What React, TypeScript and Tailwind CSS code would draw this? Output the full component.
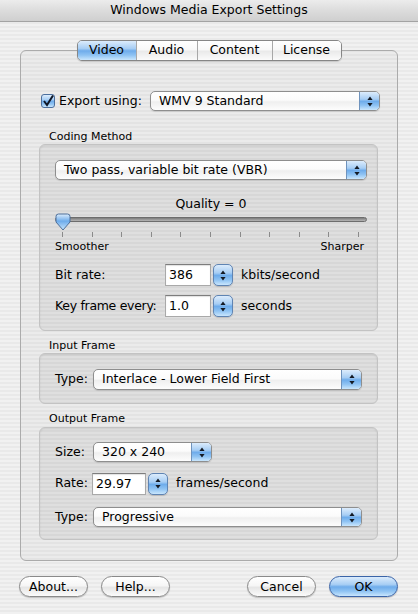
import React from 'react';

const aquaBlue =
  'bg-[linear-gradient(180deg,#dcecfc_0%,#a6cdf4_40%,#6eaceb_52%,#8fc3f3_75%,#c9e6fd_100%)]';

const Arrows: React.FC = () => (
  <svg width="6" height="11" viewBox="0 0 6 11">
    <path d="M3 0.5 L5.6 4 H0.4 Z M3 10.5 L5.6 7 H0.4 Z" fill="#141a24" />
  </svg>
);

const PopUp: React.FC<{ value: string; className: string }> = ({ value, className }) => (
  <div
    className={`flex h-[20px] shrink-0 items-stretch rounded-[5px] border border-[#8e8e8e] bg-[linear-gradient(180deg,#ffffff_0%,#fbfbfb_45%,#efefef_55%,#fdfdfd_100%)] shadow-[0_1px_1px_rgba(0,0,0,0.12)] ${className}`}
  >
    <span className="flex-1 truncate pl-[8px] text-[12.5px] leading-[18px]">{value}</span>
    <span
      className={`flex w-[20px] items-center justify-center rounded-r-[4px] border-l border-[#6f93bd] ${aquaBlue}`}
    >
      <Arrows />
    </span>
  </div>
);

const Stepper: React.FC = () => (
  <div
    className={`flex h-[22px] w-[20px] items-center justify-center rounded-[5px] border border-[#5f84b3] shadow-[0_1px_1px_rgba(0,0,0,0.15)] ${aquaBlue}`}
  >
    <Arrows />
  </div>
);

const Field: React.FC<{ value: string; className: string }> = ({ value, className }) => (
  <div
    className={`h-[22px] shrink-0 border border-[#a9a9a9] border-t-[#7d7d7d] bg-white pl-[3px] text-[12.5px] leading-[20px] shadow-[inset_0_1px_1px_rgba(0,0,0,0.12)] ${className}`}
  >
    {value}
  </div>
);

const Button: React.FC<{ label: string; primary?: boolean }> = ({ label, primary }) => (
  <button
    className={`h-[21px] w-[69px] rounded-full border text-[12.5px] leading-[19px] shadow-[0_1px_1px_rgba(0,0,0,0.2)] ${
      primary
        ? `border-[#3a64a8] ${aquaBlue}`
        : 'border-[#8a8a8a] bg-[linear-gradient(180deg,#ffffff_0%,#f6f6f6_45%,#e6e6e6_55%,#fbfbfb_100%)]'
    }`}
  >
    {label}
  </button>
);

const GroupLabel: React.FC<{ text: string }> = ({ text }) => (
  <div className="h-[14px] pl-[10px] text-[11px] leading-[14px]">{text}</div>
);

const groupBox =
  'w-[339px] rounded-[6px] border border-[#c3c3c3] bg-black/[0.05] shadow-[inset_0_1px_2px_rgba(0,0,0,0.08)]';

const ticks = Array.from({ length: 11 }, (_, i) => i);

export default function App() {
  return (
    <div className="flex h-[614px] w-[418px] flex-col whitespace-nowrap bg-[repeating-linear-gradient(180deg,#f1f1f1_0px,#f1f1f1_2px,#e9e9e9_2px,#e9e9e9_4px)] font-['DejaVu_Sans',sans-serif] text-black">
      {/* title bar */}
      <div className="flex h-[22px] items-center justify-center border-b border-[#a3a3a3] bg-[linear-gradient(180deg,#ececec_0%,#dcdcdc_50%,#cfcfcf_100%)] text-[12.5px]">
        Windows Media Export Settings
      </div>

      {/* tab panel */}
      <div className="ml-[20px] mt-[28px] flex h-[511px] w-[378px] flex-col rounded-[6px] border border-[#ababab] bg-black/[0.025] px-[18px]">
        <div className="-mt-[11px] flex h-[21px] self-center overflow-hidden rounded-[5px] border border-[#868686] text-[12.5px] shadow-[0_1px_1px_rgba(0,0,0,0.15)]">
          <div className={`flex w-[58px] items-center justify-center ${aquaBlue}`}>Video</div>
          {[
            ['Audio', 'w-[61px]'],
            ['Content', 'w-[75px]'],
            ['License', 'w-[69px]'],
          ].map(([t, w]) => (
            <div
              key={t}
              className={`flex ${w} items-center justify-center border-l border-[#a8a8a8] bg-[linear-gradient(180deg,#ffffff_0%,#f8f8f8_45%,#eaeaea_55%,#fbfbfb_100%)]`}
            >
              {t}
            </div>
          ))}
        </div>

        {/* export using */}
        <div className="ml-[2px] mt-[30px] flex h-[20px] items-center">
          <div
            className={`flex h-[14px] w-[14px] shrink-0 items-center justify-center rounded-[3px] border border-[#4b6f9e] ${aquaBlue}`}
          >
            <svg width="12" height="12" viewBox="0 0 12 12">
              <path d="M2 6 L5 10 L11 0.5" stroke="#101828" strokeWidth="2" fill="none" />
            </svg>
          </div>
          <span className="ml-[4px] w-[91px] shrink-0 text-[12.5px]">Export using:</span>
          <PopUp value="WMV 9 Standard" className="w-[230px]" />
        </div>

        {/* coding method */}
        <div className="mt-[19px]">
          <GroupLabel text="Coding Method" />
        </div>
        <div className={`${groupBox} flex flex-col pb-[13px] pl-[15px] pr-[10px] pt-[15px]`}>
          <PopUp value="Two pass, variable bit rate (VBR)" className="w-[312px]" />
          <div className="mt-[17px] h-[14px] text-center text-[12.5px] leading-[14px]">Quality = 0</div>
          <div className="relative h-[26px] w-[312px]">
            <div className="absolute left-0 right-0 top-[6px] h-[5px] rounded-full border border-[#6d6d6d] bg-[linear-gradient(180deg,#7c7c7c_0%,#b5b5b5_100%)]" />
            <svg className="absolute left-0 top-[2px]" width="16" height="18" viewBox="0 0 16 18">
              <defs>
                <linearGradient id="thumb" x1="0" y1="0" x2="0" y2="1">
                  <stop offset="0" stopColor="#dcecfc" />
                  <stop offset="0.45" stopColor="#6eaceb" />
                  <stop offset="1" stopColor="#c9e6fd" />
                </linearGradient>
              </defs>
              <path
                d="M1 3.5 Q1 1 3.5 1 H12.5 Q15 1 15 3.5 V9 L8 17 L1 9 Z"
                fill="url(#thumb)"
                stroke="#4d6f9a"
              />
            </svg>
            <div className="absolute left-[7px] right-[8px] top-[21px] flex h-[5px] justify-between">
              {ticks.map((i) => (
                <div key={i} className="h-[5px] w-px bg-[#8a8a8a]" />
              ))}
            </div>
          </div>
          <div className="mt-[3px] flex w-[309px] justify-between text-[11px] leading-[13px]">
            <span>Smoother</span>
            <span>Sharper</span>
          </div>
          <div className="mt-[11px] flex h-[22px] items-center">
            <span className="w-[110px] shrink-0 text-[12.5px]">Bit rate:</span>
            <Field value="386" className="w-[46px]" />
            <div className="ml-[2px]">
              <Stepper />
            </div>
            <span className="ml-[8px] text-[12.5px]">kbits/second</span>
          </div>
          <div className="mt-[9px] flex h-[22px] items-center">
            <span className="w-[110px] shrink-0 text-[12.5px] tracking-[-0.3px]">Key frame every:</span>
            <Field value="1.0" className="w-[46px]" />
            <div className="ml-[2px]">
              <Stepper />
            </div>
            <span className="ml-[8px] text-[12.5px]">seconds</span>
          </div>
        </div>

        {/* input frame */}
        <div className="mt-[8px]">
          <GroupLabel text="Input Frame" />
        </div>
        <div className={`${groupBox} flex h-[51px] items-center pb-[2px] pl-[15px] pr-[15px] pt-[3px]`}>
          <span className="w-[38px] shrink-0 text-[12.5px]">Type:</span>
          <PopUp value="Interlace - Lower Field First" className="h-[21px] w-[269px]" />
        </div>

        {/* output frame */}
        <div className="mb-[1px] mt-[8px]">
          <GroupLabel text="Output Frame" />
        </div>
        <div className={`${groupBox} flex flex-col pb-[12px] pl-[15px] pr-[15px] pt-[14px]`}>
          <div className="flex h-[20px] items-center">
            <span className="w-[38px] shrink-0 text-[12.5px]">Size:</span>
            <PopUp value="320 x 240" className="w-[119px]" />
          </div>
          <div className="mt-[11px] flex h-[21px] items-center">
            <span className="w-[37px] shrink-0 text-[12.5px]">Rate:</span>
            <Field value="29.97" className="h-[21px] w-[54px]" />
            <div className="ml-[2px]">
              <Stepper />
            </div>
            <span className="ml-[8px] text-[12.5px]">frames/second</span>
          </div>
          <div className="mt-[13px] flex h-[20px] items-center">
            <span className="w-[38px] shrink-0 text-[12.5px]">Type:</span>
            <PopUp value="Progressive" className="w-[269px]" />
          </div>
        </div>
      </div>

      {/* buttons */}
      <div className="mt-[15px] flex px-[19px]">
        <div className="flex gap-[13px]">
          <Button label="About..." />
          <Button label="Help..." />
        </div>
        <div className="ml-auto flex gap-[13px] pr-[1px]">
          <Button label="Cancel" />
          <Button label="OK" primary />
        </div>
      </div>
    </div>
  );
}
